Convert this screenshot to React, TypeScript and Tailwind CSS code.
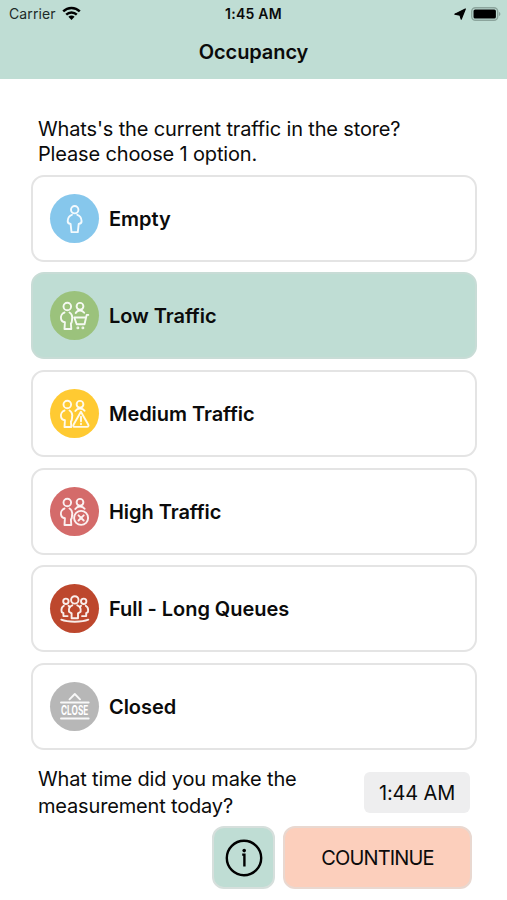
import React from "react";

function LeftPerson() {
  return (
    <>
      <circle cx="22.8" cy="21" r="3.8" />
      <path d="M20 27C17.2 28 16 31 16.6 33.6c.3 1.7 1.5 2.8 3.8 3.2L20 43.5H26.8L26.4 38c1.6-1.4.8-3.2 1.4-6.2-.2-2.4-1.2-4-2.8-4.8" />
    </>
  );
}

function RightHead() {
  return (
    <>
      <circle cx="35.5" cy="20.8" r="3.4" />
      <path d="M30.8 27.5c1.2-1.8 3-2.5 4.7-2.5s3.6.7 4.6 2.3" />
    </>
  );
}

const icons: Record<string, React.ReactNode> = {
  empty: (
    <>
      <circle cx="30.2" cy="21.2" r="3.7" />
      <path d="M27.4 26.3c-2.5.7-4 3.2-4.2 6.2-.1 1.5.6 2.6 2.9 3L27 43.6h6.3l.9-8.1c2.2-.4 3-1.5 2.9-3-.2-3-1.8-5.5-4.3-6.2" />
    </>
  ),
  low: (
    <>
      <LeftPerson />
      <circle cx="35.5" cy="20.8" r="3.4" />
      <path d="M31.2 27.5c1-1.7 2.6-2.5 4.3-2.5s3.2.8 4.2 2.3" />
      <path d="M43.8 29.4H42.2L40 38.8H32.2L29.8 32H41.2" />
      <circle cx="33.4" cy="42.4" r=".5" />
      <circle cx="38.4" cy="42.4" r=".5" />
    </>
  ),
  medium: (
    <>
      <LeftPerson />
      <RightHead />
      <path fill="#ffca32" d="M36.4 28.3 29 41.2c-.6 1 .1 2.2 1.3 2.2h12.3c1.2 0 1.8-1.2 1.2-2.2Z" />
      <path d="M36.5 33.2v4.6M36.5 40.3v.4" />
    </>
  ),
  high: (
    <>
      <LeftPerson />
      <RightHead />
      <circle cx="36.6" cy="36.4" r="7" fill="#d46b6a" />
      <path d="m34 33.8 5.2 5.2m0-5.2L34 39" />
    </>
  ),
  full: (
    <>
      <circle cx="21.4" cy="22.8" r="2.7" />
      <circle cx="39.2" cy="22.8" r="2.7" />
      <path d="M19.3 27.3c-2.2 1.2-2.6 4-2.1 6.3l1.7 1v3h4.2M24 27.3l1.2 1M41.3 27.3c2.2 1.2 2.6 4 2.1 6.3l-1.7 1v3h-4.2M36.6 27.3l-1.2 1" />
      <circle cx="30.3" cy="21.4" r="3.7" />
      <path d="M27.8 26.8c-2.5 1-3.8 3.7-3.3 6.5l2.6 1.6V39.7h6.4v-4.8l2.6-1.6c.5-2.8-.8-5.5-3.3-6.5" />
      <path d="M16.8 41.2c6.3 2.7 20.7 2.7 27 0" />
    </>
  ),
  closed: (
    <>
      <path d="m25 22.8 5.3-5.3 5.2 5.3M16.5 26h27.7M16.5 42h27.7" />
      <text x="16.5" y="38.7" textLength="27.4" lengthAdjust="spacingAndGlyphs" fill="white" stroke="none" className="font-['Inter',sans-serif] text-[12.5px] font-bold">CLOSE</text>
    </>
  ),
};

const options = [
  { id: "empty", label: "Empty", color: "bg-[#86c7ec]" },
  { id: "low", label: "Low Traffic", color: "bg-[#9bc27c]" },
  { id: "medium", label: "Medium Traffic", color: "bg-[#ffca32]" },
  { id: "high", label: "High Traffic", color: "bg-[#d46b6a]" },
  { id: "full", label: "Full - Long Queues", color: "bg-[#bd472d]" },
  { id: "closed", label: "Closed", color: "bg-[#b7b7b7]" },
];

function StatusBar() {
  return (
    <div className="grid h-[27px] grid-cols-3 items-center pl-[9px] pr-[6px] text-[14px]">
      <div className="flex items-center gap-[6px] text-[#1d2b28]">
        <span className="tracking-[0.1px]">Carrier</span>
        <svg width="19" height="15" viewBox="0 0 19 15" fill="none" stroke="black" strokeWidth="2.4">
          <path d="M1.2 5.4C5.8.8 13.2.8 17.8 5.4M4.2 8.6c3-2.9 7.6-2.9 10.6 0" />
          <path d="M9.5 14 6.4 10.8c1.8-1.6 4.4-1.6 6.2 0Z" fill="black" stroke="none" />
        </svg>
      </div>
      <span className="pr-[3px] text-center font-semibold tracking-[0.25px]">1:45 AM</span>
      <div className="flex items-center justify-end gap-[5px]">
        <svg width="12" height="12" viewBox="0 0 12 12">
          <path d="M11.3 1 7.2 11.2 6 7.2.8 6.2Z" stroke="black" strokeWidth="1.2" strokeLinejoin="round" />
        </svg>
        <svg width="30" height="14" viewBox="0 0 30 14">
          <rect x=".7" y=".7" width="26" height="12.6" rx="3.8" fill="none" stroke="#8ba49c" strokeWidth="1.4" />
          <rect x="2.5" y="2.5" width="22.4" height="9" rx="1.6" />
          <path d="M28 5c1.8.5 1.8 3.5 0 4Z" fill="#8ba49c" />
        </svg>
      </div>
    </div>
  );
}

export default function App() {
  return (
    <main className="flex h-[900px] w-full flex-col overflow-hidden bg-white font-['Inter',sans-serif] text-[#0b0b0b]">
      <header className="h-[79px] shrink-0 bg-[#bfddd4]">
        <StatusBar />
        <h1 className="pt-[10px] text-center text-[20px] leading-[30px] font-semibold tracking-[-0.1px]">Occupancy</h1>
      </header>
      <p className="mt-[38px] ml-[38px] text-[20px] leading-[25px] tracking-[-0.15px] whitespace-nowrap">
        Whats's the current traffic in the store?
        <br />
        Please choose 1 option.
      </p>
      <div className="mt-[7.5px] mr-[30px] ml-[31px] flex flex-col gap-[10.7px]">
        {options.map((option) => (
          <button
            key={option.id}
            className={`flex h-[87px] items-center gap-[10px] rounded-[13px] border-2 pl-[17px] text-left ${option.id === "low" ? "border-[#c8dcd6] bg-[#bfddd4]" : "border-[#e4e4e4] bg-white"}`}
          >
            <span className={`size-[49px] shrink-0 rounded-full ${option.color}`}>
              <svg className="overflow-visible" viewBox="5.5 5.5 49 49" fill="none" stroke="white" strokeOpacity=".9" strokeWidth="1.9" strokeLinecap="round" strokeLinejoin="round">
                {icons[option.id]}
              </svg>
            </span>
            <span className="pt-px text-[20px] font-semibold tracking-[-0.05px]">{option.label}</span>
          </button>
        ))}
      </div>
      <div className="mt-[16.5px] mr-[37px] ml-[38px] flex items-center justify-between">
        <p className="text-[20px] leading-[26.5px] tracking-[-0.17px]">
          What time did you make the
          <br />
          measurement today?
        </p>
        <button className="h-[41px] w-[106px] rounded-[6px] bg-[#eeeeef] text-[20px] tracking-[-0.15px]">1:44 AM</button>
      </div>
      <div className="mt-[7px] mr-[35px] flex justify-end gap-[8px]">
        <button aria-label="Information" className="flex h-[63px] w-[63px] items-center justify-center rounded-[12px] border-2 border-[#d6dfdc] bg-[#bfddd4]">
          <svg width="38" height="38" viewBox="0 0 38 38" fill="none" stroke="black" strokeWidth="2.4">
            <circle cx="19" cy="19" r="17.2" />
            <path d="M17.2 15.6h2.2v12" strokeWidth="2.4" />
            <circle cx="19.2" cy="11.6" r="1.8" fill="black" stroke="none" />
          </svg>
        </button>
        <button className="h-[63px] w-[189px] rounded-[12px] border-2 border-[#e9d8d0] bg-[#fccfbc] text-[20px] tracking-[-0.85px]">COUNTINUE</button>
      </div>
    </main>
  );
}
